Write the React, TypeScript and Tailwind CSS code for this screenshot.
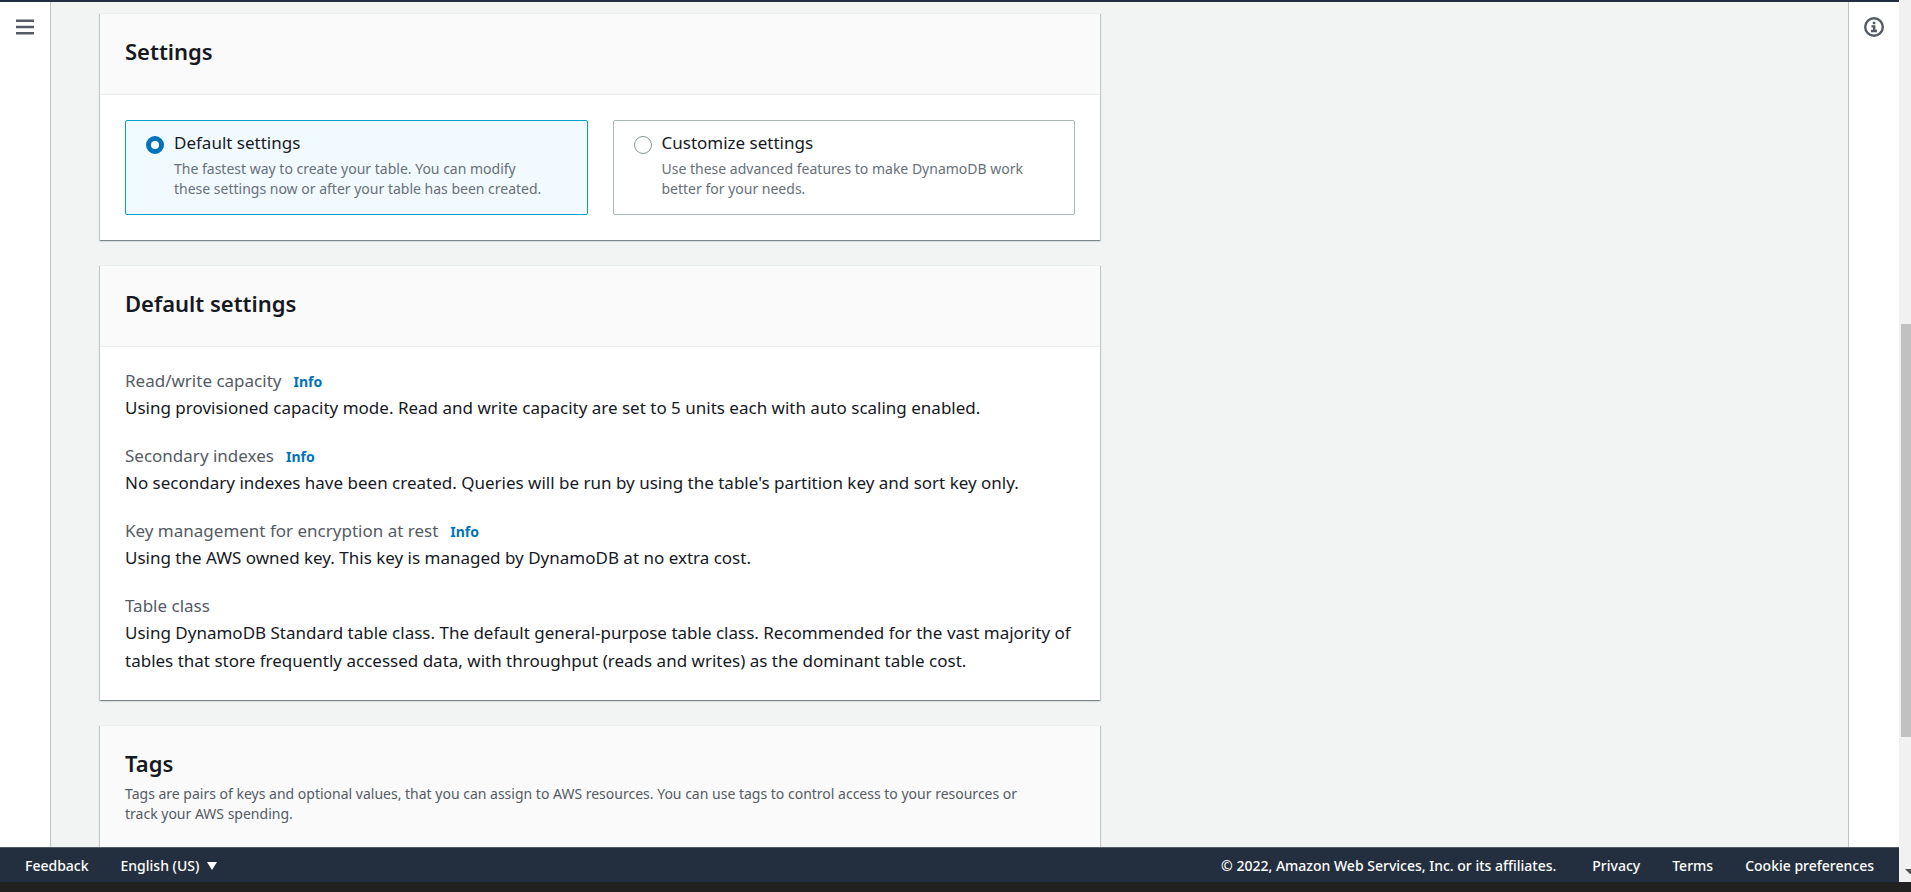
import { useState, type ReactNode } from "react";

const FIELDS = [
  {
    label: "Read/write capacity",
    info: true,
    value: "Using provisioned capacity mode. Read and write capacity are set to 5 units each with auto scaling enabled.",
  },
  {
    label: "Secondary indexes",
    info: true,
    value: "No secondary indexes have been created. Queries will be run by using the table's partition key and sort key only.",
  },
  {
    label: "Key management for encryption at rest",
    info: true,
    value: "Using the AWS owned key. This key is managed by DynamoDB at no extra cost.",
  },
  {
    label: "Table class",
    info: false,
    value:
      "Using DynamoDB Standard table class. The default general-purpose table class. Recommended for the vast majority of tables that store frequently accessed data, with throughput (reads and writes) as the dominant table cost.",
  },
];

const OPTIONS = [
  {
    id: "default",
    title: "Default settings",
    text: "The fastest way to create your table. You can modify these settings now or after your table has been created.",
  },
  {
    id: "customize",
    title: "Customize settings",
    text: "Use these advanced features to make DynamoDB work better for your needs.",
  },
];

function Card({ title, description, children }: { title: string; description?: string; children?: ReactNode }) {
  return (
    <section className="border-t border-[#eaeded] bg-white shadow-[0_1px_1px_0_rgba(0,28,36,0.3),1px_1px_1px_0_rgba(0,28,36,0.15),-1px_1px_1px_0_rgba(0,28,36,0.15)]">
      <header className="min-h-[81px] border-b border-[#eaeded] bg-[#fafafa] px-[25px] pt-[22px] pb-7">
        <h2 className="text-[22px] leading-[30px] font-semibold">{title}</h2>
        {description && <p className="mt-1.5 pr-10 text-sm leading-5 text-[#545b64]">{description}</p>}
      </header>
      {children}
    </section>
  );
}

export default function App() {
  const [selected, setSelected] = useState("default");

  return (
    <div className="flex h-screen flex-col overflow-hidden bg-[#212121] font-['Noto_Sans','Open_Sans',sans-serif] text-[#16191f]">
      <div className="flex min-h-0 flex-1">
        <div className="flex min-w-0 flex-1 flex-col">
          <div className="h-0.5 shrink-0 bg-[#232f3e]" />
          <div className="flex min-h-0 flex-1 bg-[#f2f3f3]">
            <nav className="w-[51px] shrink-0 border-r border-[#bfc4c5] bg-white">
              <button type="button" aria-label="Open navigation" className="mt-[15px] ml-4 block text-[#545b64]">
                <svg width="18" height="20" viewBox="0 0 18 20" fill="none" stroke="currentColor" strokeWidth="2.5">
                  <path d="M0 3.75h18M0 10h18M0 16.25h18" />
                </svg>
              </button>
            </nav>

            <main className="min-w-0 flex-1 overflow-hidden pt-[11px] pr-12 pl-[49px]">
              <div className="flex max-w-[1000px] flex-col gap-[25px]">
                <Card title="Settings">
                  <div className="grid grid-cols-2 gap-[25px] p-[25px]">
                    {OPTIONS.map((option) => (
                      <label
                        key={option.id}
                        htmlFor={option.id}
                        className={`flex gap-2.5 rounded-xs border pt-2 pr-9 pb-[15px] pl-5 ${
                          selected === option.id ? "border-[#00a1c9] bg-[#f1faff]" : "border-[#aab7b8] bg-white"
                        }`}
                      >
                        <input
                          id={option.id}
                          type="radio"
                          name="settings"
                          checked={selected === option.id}
                          onChange={() => setSelected(option.id)}
                          className="mt-[7px] size-[18px] shrink-0 appearance-none rounded-full border border-[#879596] bg-white checked:border-[5px] checked:border-[#0073bb]"
                        />
                        <span className="flex flex-col gap-0.5">
                          <span className="text-[17px] leading-7">{option.title}</span>
                          <span className="text-sm leading-5 text-[#687078]">{option.text}</span>
                        </span>
                      </label>
                    ))}
                  </div>
                </Card>

                <Card title="Default settings">
                  <dl className="flex flex-col gap-[21px] px-[25px] pt-[21px] pb-[25px]">
                    {FIELDS.map((field) => (
                      <div key={field.label}>
                        <dt className="flex items-baseline gap-3 text-[17px] leading-[26px] text-[#545b64]">
                          {field.label}
                          {field.info && (
                            <a href="#info" className="text-sm leading-5 font-bold text-[#0073bb]">
                              Info
                            </a>
                          )}
                        </dt>
                        <dd className="text-[17px] leading-7">{field.value}</dd>
                      </div>
                    ))}
                  </dl>
                </Card>

                <Card
                  title="Tags"
                  description="Tags are pairs of keys and optional values, that you can assign to AWS resources. You can use tags to control access to your resources or track your AWS spending."
                />
              </div>
            </main>

            <aside className="w-[51px] shrink-0 border-l border-[#bfc4c5] bg-white">
              <button type="button" aria-label="Open information panel" className="mt-[15px] ml-[15px] block text-[#545b64]">
                <svg width="20" height="20" viewBox="0 0 20 20" fill="none" stroke="currentColor" strokeWidth="2.4">
                  <circle cx="10" cy="10" r="8.8" />
                  <path d="M7.5 9.4H10.2V13.8M7 14H13M8.8 6H11.4" />
                </svg>
              </button>
            </aside>
          </div>

          <footer className="flex h-[35px] shrink-0 items-center justify-between border-t border-[#545b64] bg-[#232f3e] px-[25px] pt-0.5 text-sm font-medium text-white">
            <div className="flex items-center gap-8">
              <a href="#feedback">Feedback</a>
              <button type="button" className="flex items-center gap-2">
                English (US)
                <svg width="10" height="8" viewBox="0 0 10 8" fill="currentColor">
                  <path d="M0 0h10L5 8z" />
                </svg>
              </button>
            </div>
            <div className="flex items-center gap-8">
              <span className="mr-1">© 2022, Amazon Web Services, Inc. or its affiliates.</span>
              <a href="#privacy">Privacy</a>
              <a href="#terms">Terms</a>
              <a href="#cookies">Cookie preferences</a>
            </div>
          </footer>
        </div>

        <div className="flex w-3 shrink-0 flex-col items-end justify-between bg-[#f1f1f1] pt-[324px] pb-2">
          <div className="h-[413px] w-2.5 bg-[#c1c1c1]" />
          <svg width="6" height="5" viewBox="0 0 6 5" fill="#505050">
            <path d="M0 0h6v5H5z" />
          </svg>
        </div>
      </div>
      <div className="h-2.5 shrink-0 bg-[#212121]" />
    </div>
  );
}
